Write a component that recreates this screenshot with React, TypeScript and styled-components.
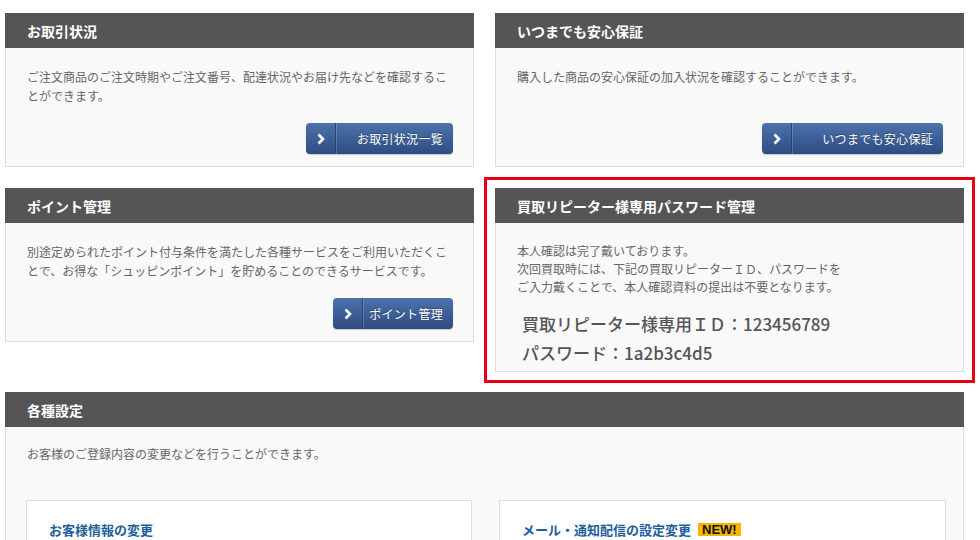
import styled, { createGlobalStyle } from 'styled-components';

const GlobalStyle = createGlobalStyle`
  body {
    margin: 0;
    background: #ffffff;
    font-family: "Noto Sans CJK JP", "Noto Sans", sans-serif;
    color: #666666;
  }
`;

const Chevron = () => (
  <svg width='10' height='12' viewBox='0 0 10 12'>
    <path d='M2.5 1.5 L7 6 L2.5 10.5' fill='none' stroke='#ffffff' strokeWidth='2.6' strokeLinejoin='miter' />
  </svg>
);

const LinkButton = ({ label, width }: { label: string; width: number }) => (
  <ButtonBox $width={width}>
    <ButtonIcon>
      <Chevron />
    </ButtonIcon>
    <ButtonLabel>{label}</ButtonLabel>
  </ButtonBox>
);

const App = () => {
  return (
    <>
      <GlobalStyle />
      <Page>
        <CardGrid>
          <Card>
            <CardHeader>お取引状況</CardHeader>
            <CardBody>
              <CardText>
                ご注文商品のご注文時期やご注文番号、配達状況やお届け先などを確認するこ
                <br />
                とができます。
              </CardText>
              <LinkButton label='お取引状況一覧' width={147} />
            </CardBody>
          </Card>
          <Card>
            <CardHeader>いつまでも安心保証</CardHeader>
            <CardBody>
              <CardText>購入した商品の安心保証の加入状況を確認することができます。</CardText>
              <LinkButton label='いつまでも安心保証' width={181} />
            </CardBody>
          </Card>
          <Card>
            <CardHeader>ポイント管理</CardHeader>
            <CardBody>
              <CardText>
                別途定められたポイント付与条件を満たした各種サービスをご利用いただくこ
                <br />
                とで、お得な「シュッピンポイント」を貯めることのできるサービスです。
              </CardText>
              <LinkButton label='ポイント管理' width={120} />
            </CardBody>
          </Card>
          <Card $highlight>
            <CardHeader>買取リピーター様専用パスワード管理</CardHeader>
            <RepeaterBody>
              <SmallText>
                本人確認は完了戴いております。
                <br />
                次回買取時には、下記の買取リピーターＩＤ、パスワードを
                <br />
                ご入力戴くことで、本人確認資料の提出は不要となります。
              </SmallText>
              <Credentials>
                <CredentialLine>買取リピーター様専用ＩＤ：123456789</CredentialLine>
                <CredentialLine>パスワード：1a2b3c4d5</CredentialLine>
              </Credentials>
            </RepeaterBody>
          </Card>
        </CardGrid>

        <Section>
          <CardHeader>各種設定</CardHeader>
          <SectionBody>
            <CardText>お客様のご登録内容の変更などを行うことができます。</CardText>
            <SettingGrid>
              <SettingBox>
                <SettingTitle>お客様情報の変更</SettingTitle>
              </SettingBox>
              <SettingBox>
                <SettingTitle>
                  メール・通知配信の設定変更
                  <NewBadge>NEW!</NewBadge>
                </SettingTitle>
              </SettingBox>
            </SettingGrid>
          </SectionBody>
        </Section>
      </Page>
    </>
  );
};

export default App;

const Page = styled.div`
  width: 959px;
  padding: 13px 0 0 5px;
  display: flex;
  flex-direction: column;
  gap: 20px;
`;

const CardGrid = styled.div`
  display: grid;
  grid-template-columns: 469px 469px;
  column-gap: 21px;
  row-gap: 21px;
  align-items: start;
`;

const Card = styled.div<{ $highlight?: boolean }>`
  display: flex;
  flex-direction: column;
  min-height: 153px;
  border: 1px solid #dddddd;
  border-top: none;
  background: #f9f9f9;
  outline: ${({ $highlight }) => ($highlight ? '3px solid #e60012' : 'none')};
  outline-offset: 8px;
`;

const CardHeader = styled.div`
  height: 35px;
  margin: 0 -1px;
  padding: 0 22px;
  display: flex;
  align-items: center;
  background: #555555;
  color: #ffffff;
  font-size: 14px;
  font-weight: bold;
`;

const CardBody = styled.div`
  flex: 1;
  display: flex;
  flex-direction: column;
  padding: 19px 20px 12px 21px;
`;

const CardText = styled.p`
  margin: 0;
  font-size: 12px;
  line-height: 19px;
  color: #666666;
`;

const ButtonBox = styled.div<{ $width: number }>`
  margin-top: auto;
  align-self: flex-end;
  display: flex;
  width: ${({ $width }) => $width}px;
  height: 31px;
  border-radius: 4px;
  background: linear-gradient(#4d72ab, #2d4c82);
  box-shadow: 0 1px 1px rgba(0, 0, 0, 0.2);
  color: #ffffff;
  cursor: pointer;
`;

const ButtonIcon = styled.div`
  width: 29px;
  display: flex;
  align-items: center;
  justify-content: center;
  border-right: 1px solid #2a4575;
  box-shadow: 1px 0 0 rgba(255, 255, 255, 0.18);
`;

const ButtonLabel = styled.div`
  flex: 1;
  display: flex;
  align-items: center;
  justify-content: flex-end;
  padding: 0 10px 0 0;
  font-size: 12px;
  letter-spacing: 0.3px;
  white-space: nowrap;
  text-shadow: 0 -1px 0 rgba(0, 0, 0, 0.3);
`;

const RepeaterBody = styled.div`
  padding: 19px 20px 4px 21px;
`;

const SmallText = styled.p`
  margin: 0;
  font-size: 12px;
  line-height: 18px;
  color: #666666;
`;

const Credentials = styled.div`
  margin-top: 13px;
  padding-left: 5px;
`;

const CredentialLine = styled.div`
  font-size: 17px;
  line-height: 29px;
  font-weight: 500;
  color: #555555;
`;

const Section = styled.div`
  border: 1px solid #dddddd;
  border-top: none;
  background: #f9f9f9;
`;

const SectionBody = styled.div`
  padding: 17px 19px 0 21px;
`;

const SettingGrid = styled.div`
  display: grid;
  grid-template-columns: 446px 447px;
  column-gap: 27px;
  margin-top: 37px;
  margin-left: -1px;
`;

const SettingBox = styled.div`
  height: 60px;
  background: #ffffff;
  border: 1px solid #dddddd;
  padding: 19px 22px 0;
`;

const SettingTitle = styled.div`
  display: flex;
  align-items: center;
  gap: 7px;
  font-size: 13px;
  font-weight: bold;
  color: #1d5f9b;
`;

const NewBadge = styled.span`
  display: inline-block;
  padding: 0 4px;
  height: 13px;
  line-height: 13px;
  background: #f8b500;
  color: #111111;
  font-family: "Liberation Sans", Arial, sans-serif;
  font-size: 13px;
  font-weight: bold;
`;
